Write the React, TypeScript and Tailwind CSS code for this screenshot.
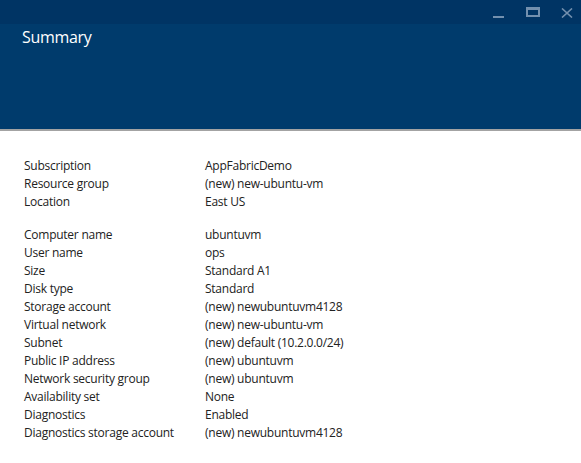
import React from "react";

const group1: [string, string][] = [
  ["Subscription", "AppFabricDemo"],
  ["Resource group", "(new) new-ubuntu-vm"],
  ["Location", "East US"],
];
const group2: [string, string][] = [
  ["Computer name", "ubuntuvm"],
  ["User name", "ops"],
  ["Size", "Standard A1"],
  ["Disk type", "Standard"],
  ["Storage account", "(new) newubuntuvm4128"],
  ["Virtual network", "(new) new-ubuntu-vm"],
  ["Subnet", "(new) default (10.2.0.0/24)"],
  ["Public IP address", "(new) ubuntuvm"],
  ["Network security group", "(new) ubuntuvm"],
  ["Availability set", "None"],
  ["Diagnostics", "Enabled"],
  ["Diagnostics storage account", "(new) newubuntuvm4128"],
];

function Rows({ rows }: { rows: [string, string][] }) {
  return (
    <div className="flex flex-col">
      {rows.map(([k, v]) => (
        <div key={k} className="flex h-[18px] leading-[18px]">
          <div className="w-[181px] shrink-0">{k}</div>
          <div>{v}</div>
        </div>
      ))}
    </div>
  );
}

export default function App() {
  return (
    <div
      className="w-[581px] h-[463px] bg-white overflow-hidden"
      style={{ fontFamily: '"Open Sans", "Noto Sans", sans-serif' }}
    >
      <div className="h-[131px] bg-[#003b6c] border-b-2 border-[#a3a3a3] flex flex-col">
        <div className="h-[24px] bg-[#003464] flex items-start justify-end">
          <div className="flex items-start h-full">
            <div className="w-[11px] h-[2px] bg-[#7390ae] mt-[16px] mr-[22px]" />
            <div className="w-[14px] h-[10px] border-[#7390ae] border-x-2 border-b-2 border-t-[3px] mt-[7px] mr-[21px]" />
            <svg width="12" height="10" viewBox="0 0 12 10" className="mt-[8px] mr-[8px]">
              <path d="M1 0.5 L11 9.5 M11 0.5 L1 9.5" stroke="#7390ae" strokeWidth="1.6" />
            </svg>
          </div>
        </div>
        <div className="pl-[22px] pt-[1px] text-[16px] leading-[24px] text-white font-normal tracking-[-0.3px]">
          Summary
        </div>
      </div>
      <div className="pl-[24px] pt-[26px] text-[12px] text-[#222222] tracking-[-0.25px]">
        <Rows rows={group1} />
        <div className="h-[15px]" />
        <Rows rows={group2} />
      </div>
    </div>
  );
}
